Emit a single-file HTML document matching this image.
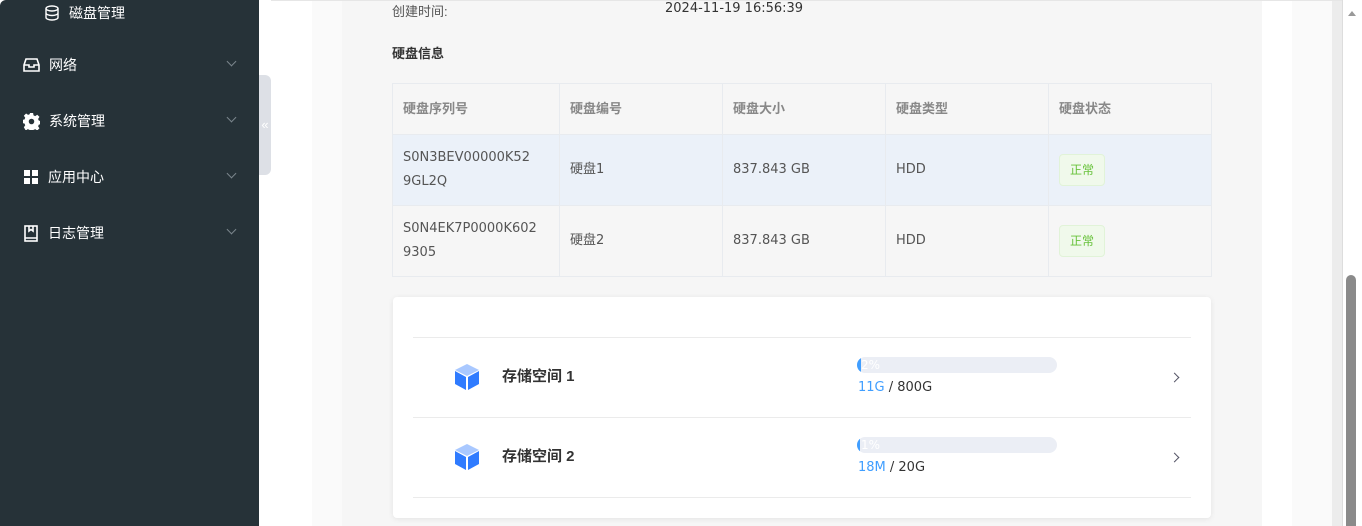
<!DOCTYPE html>
<html><head><meta charset="utf-8"><style>
*{margin:0;padding:0;box-sizing:border-box}
html,body{width:1362px;height:526px;overflow:hidden}
body{font-family:"Liberation Sans","Noto Sans CJK SC",sans-serif;background:#fff;position:relative;font-size:14px}
.dv{font-family:"DejaVu Sans","Noto Sans CJK SC",sans-serif}
.side{position:absolute;left:0;top:0;width:259px;height:526px;background:#263238;color:#fff;border-top-left-radius:6px}
.mi{position:absolute;left:23px;font-size:14px;display:flex;align-items:center}
.mi svg{margin-right:9px}
.chev{position:absolute;left:228px;width:7px;height:7px;border-right:1px solid #7a858c;border-bottom:1px solid #7a858c;transform:rotate(45deg)}
.tab{position:absolute;left:259px;top:75px;width:12px;height:100px;background:#dde0e6;border-radius:0 6px 6px 0;color:#fff;font-size:13px;line-height:100px;text-align:center}
.main{position:absolute;left:271px;top:0;width:1071px;height:526px;background:#fff;border-top:1px solid #e6e6e6}
.l1{position:absolute;left:41px;top:0;width:950px;height:526px;background:#fafafa}
.panel{position:absolute;left:71px;top:0;width:920px;height:526px;background:#f6f6f6}
.r1{position:absolute;left:1021px;top:0;width:40px;height:526px;background:#fafafa}
.r2{position:absolute;left:1061px;top:0;width:10px;height:526px;background:#ececec}
.sb{position:absolute;left:1342px;top:0;width:20px;height:526px;background:#fff;border-left:1px solid #ddd}
.thumb{position:absolute;left:1346px;top:275px;width:10px;height:251px;background:#8a8a8a;border-radius:5px 5px 0 0}
.t{position:absolute;font-size:13px;color:#333}
table{position:absolute;left:392px;top:83px;border-collapse:collapse;width:820px}
td,th{border:1px solid #e8ebef;padding:0 10px;text-align:left;font-weight:normal;color:#555;font-size:13px;line-height:24px;font-family:"DejaVu Sans","Noto Sans CJK SC",sans-serif}
th{height:51px;color:#888;font-weight:bold;font-family:"Liberation Sans","Noto Sans CJK SC",sans-serif}
tr.hl td{background:#ebf1f9}
.tag{display:inline-block;width:46px;height:32px;line-height:30px;text-align:center;font-size:12px;color:#67c23a;background:#f0f9eb;border:1px solid #e1f3d8;border-radius:4px;font-family:"Liberation Sans","Noto Sans CJK SC",sans-serif}
.card{position:absolute;left:393px;top:297px;width:818px;height:221px;background:#fff;border-radius:4px;box-shadow:0 1px 6px rgba(0,0,0,.08)}
.line{position:absolute;left:20px;width:778px;height:1px;background:#ebebeb}
.row{position:absolute;left:0;width:818px;height:80px}
.nm{position:absolute;left:109px;top:28px;font-size:15px;font-weight:bold;color:#333}
.bar{position:absolute;left:464px;width:200px;height:16px;background:#ebeef5;border-radius:8px;overflow:hidden;color:#fff;font-size:12px;line-height:16px}
.bar i{position:absolute;left:0;top:0;height:16px;background:#409eff;border-radius:8px}
.bar span{position:relative;padding-left:4px}
.sz{position:absolute;left:465px;font-size:13px;color:#333}
.sz b{color:#409eff;font-weight:normal}
.arr{position:absolute;left:778px;width:7px;height:7px;border-right:1px solid #556;border-top:1px solid #556;transform:rotate(45deg)}
</style></head><body>
<div class="side">
 <div class="mi" style="left:44px;top:3px"><svg width="16" height="16" viewBox="0 0 16 16" fill="none" stroke="#fff" stroke-width="1.4"><ellipse cx="8" cy="3.5" rx="6" ry="2.5"/><path d="M2 3.5v9c0 1.4 2.7 2.5 6 2.5s6-1.1 6-2.5v-9M2 8c0 1.4 2.7 2.5 6 2.5S14 9.4 14 8"/></svg>磁盘管理</div>
 <div class="mi" style="top:55px"><svg width="17" height="16" viewBox="0 0 17 16" fill="none" stroke="#fff" stroke-width="1.6"><path d="M3 2h11l2 6v6H1V8z M1 8h5v2h5V8h5"/></svg>网络</div><div class="chev" style="top:58px"></div>
 <div class="mi" style="top:111px"><svg width="17" height="17" viewBox="0 0 16 16"><path fill="#fff" d="M6.5 0h3l.4 2.2 1.6.7 1.9-1.3 2.1 2.1-1.3 1.9.7 1.6 2.1.3v3l-2.1.4-.7 1.6 1.3 1.9-2.1 2.1-1.9-1.3-1.6.7-.4 2.1h-3l-.4-2.1-1.6-.7-1.9 1.3L.8 13.4l1.3-1.9-.7-1.6L-.7 9.5v-3l2.1-.4.7-1.6L.8 2.6 2.9.5l1.9 1.3 1.6-.7z"/><circle cx="8" cy="8" r="2.6" fill="#263238"/></svg>系统管理</div><div class="chev" style="top:114px"></div>
 <div class="mi" style="top:167px"><svg width="16" height="16" viewBox="0 0 16 16" fill="#fff"><rect x="1" y="1" width="6" height="6"/><rect x="9" y="1" width="6" height="6"/><rect x="1" y="9" width="6" height="6"/><rect x="9" y="9" width="6" height="6"/></svg>应用中心</div><div class="chev" style="top:170px"></div>
 <div class="mi" style="top:223px"><svg width="16" height="17" viewBox="0 0 16 17" fill="none" stroke="#fff" stroke-width="1.6"><rect x="2" y="1" width="12" height="15"/><path d="M6 1v5l2-1.5L10 6V1M2 13h12"/></svg>日志管理</div><div class="chev" style="top:226px"></div>
</div>
<div class="tab">«</div>
<div class="main"><div class="l1"></div><div class="panel"></div><div class="r1"></div><div class="r2"></div></div>
<div class="sb"><div style="position:absolute;left:5px;top:11px;border:4px solid transparent;border-bottom:5px solid #999;border-top:0"></div></div>
<div class="thumb"></div>
<div class="t" style="left:392px;top:1px;color:#555">创建时间:</div>
<div class="t dv" style="left:665px;top:1px">2024-11-19 16:56:39</div>
<div class="t" style="left:392px;top:43px;font-weight:bold;font-size:13px">硬盘信息</div>
<table>
<tr><th style="width:167px">硬盘序列号</th><th style="width:163px">硬盘编号</th><th style="width:163px">硬盘大小</th><th style="width:163px">硬盘类型</th><th>硬盘状态</th></tr>
<tr class="hl" style="height:71px"><td>S0N3BEV00000K52<br>9GL2Q</td><td>硬盘1</td><td>837.843 GB</td><td>HDD</td><td><span class="tag">正常</span></td></tr>
<tr style="height:71px"><td>S0N4EK7P0000K602<br>9305</td><td>硬盘2</td><td>837.843 GB</td><td>HDD</td><td><span class="tag">正常</span></td></tr>
</table>
<div class="card">
 <div class="line" style="top:40px"></div>
 <div class="line" style="top:120px"></div>
 <div class="line" style="top:200px"></div>
 <div class="row" style="top:40px">
  <svg style="position:absolute;left:61px;top:26px" width="26" height="28" viewBox="0 0 26 28"><path fill="#a9c8ff" d="M13 1l12 6-12 6L1 7z"/><path fill="#2f7bff" d="M1 8l11 6v13L1 21zM14 14l11-6v13l-11 6z"/></svg>
  <div class="nm">存储空间 1</div>
  <div class="bar dv" style="top:20px"><i style="width:4px"></i><span>2%</span></div>
  <div class="sz dv" style="top:43px"><b>11G</b> / 800G</div>
  <div class="arr" style="top:37px"></div>
 </div>
 <div class="row" style="top:120px">
  <svg style="position:absolute;left:61px;top:26px" width="26" height="28" viewBox="0 0 26 28"><path fill="#a9c8ff" d="M13 1l12 6-12 6L1 7z"/><path fill="#2f7bff" d="M1 8l11 6v13L1 21zM14 14l11-6v13l-11 6z"/></svg>
  <div class="nm">存储空间 2</div>
  <div class="bar dv" style="top:20px"><i style="width:3px"></i><span>1%</span></div>
  <div class="sz dv" style="top:43px"><b>18M</b> / 20G</div>
  <div class="arr" style="top:37px"></div>
 </div>
</div>
</body></html>
